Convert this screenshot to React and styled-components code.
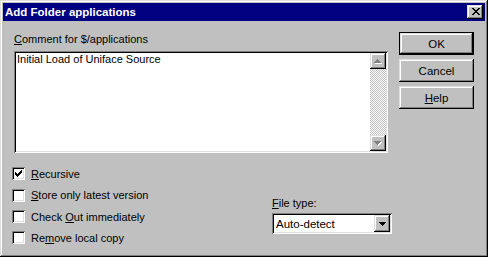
import React from "react";
import styled, { createGlobalStyle } from "styled-components";

// pixel glyphs, one string per row
const pix = (rows) =>
  rows
    .flatMap((r, y) => [...r].map((c, x) => (c === "X" ? `M${x} ${y}h1v1h-1z` : "")))
    .join("");

const CLOSE = ["XX....XX", ".XX..XX.", "..XXXX..", "...XX...", "..XXXX..", ".XX..XX.", "XX....XX"];
const UP = ["...X...", "..XXX..", ".XXXXX.", "XXXXXXX"];
const DOWN = ["XXXXXXX", ".XXXXX.", "..XXX..", "...X..."];
const CHECK = ["......X", ".....XX", "X...XXX", "XX.XXX.", "XXXXX..", ".XXX...", "..X...."];

const raised = `
  box-shadow: inset -1px -1px #000, inset 1px 1px #dfdfdf,
    inset -2px -2px #808080, inset 2px 2px #fff;
`;
const sunken = `
  box-shadow: inset 1px 1px #808080, inset -1px -1px #fff,
    inset 2px 2px #000, inset -2px -2px #dfdfdf;
`;

const GlobalStyle = createGlobalStyle`
  html, body { margin: 0; padding: 0; background: #c0c0c0; }
  body {
    font-family: "Liberation Sans", Arial, sans-serif;
    font-size: 11px;
    color: #000;
  }
  u { text-underline-offset: 1px; }
`;

function Glyph({ rows, color = "#000", shadow }) {
  const w = rows[0].length;
  const h = rows.length;
  const d = pix(rows);
  return (
    <svg width={w + (shadow ? 1 : 0)} height={h + (shadow ? 1 : 0)} shapeRendering="crispEdges">
      {shadow && <path d={d} fill={shadow} transform="translate(1 1)" />}
      <path d={d} fill={color} />
    </svg>
  );
}

export default function App() {
  return (
    <>
      <GlobalStyle />
      <Window>
        <TitleBar>
          <span>Add Folder applications</span>
          <CloseButton>
            <Glyph rows={CLOSE} />
          </CloseButton>
        </TitleBar>

        <Body>
          <LeftCol>
            <Label $mt={1}>
              <u>C</u>omment for $/applications
            </Label>
            <TextArea>
              <TextContent>Initial Load of Uniface Source</TextContent>
              <ScrollBar>
                <ScrollButton>
                  <Glyph rows={UP} color="#808080" shadow="#fff" />
                </ScrollButton>
                <ScrollButton>
                  <Glyph rows={DOWN} color="#808080" shadow="#fff" />
                </ScrollButton>
              </ScrollBar>
            </TextArea>

            <BottomRow>
              <CheckList>
                <CheckRow>
                  <CheckBox>
                    <Glyph rows={CHECK} />
                  </CheckBox>
                  <span><u>R</u>ecursive</span>
                </CheckRow>
                <CheckRow $tall>
                  <CheckBox />
                  <span><u>S</u>tore only latest version</span>
                </CheckRow>
                <CheckRow>
                  <CheckBox />
                  <span>Check <u>O</u>ut immediately</span>
                </CheckRow>
                <CheckRow>
                  <CheckBox />
                  <span>Re<u>m</u>ove local copy</span>
                </CheckRow>
              </CheckList>

              <FileGroup>
                <Label>
                  <u>F</u>ile type:
                </Label>
                <Combo>
                  <ComboText>Auto-detect</ComboText>
                  <ComboButton>
                    <Glyph rows={DOWN} />
                  </ComboButton>
                </Combo>
              </FileGroup>
            </BottomRow>
          </LeftCol>

          <ButtonCol>
            <Button $default>OK</Button>
            <Button>Cancel</Button>
            <Button>
              <u>H</u>elp
            </Button>
          </ButtonCol>
        </Body>
      </Window>
    </>
  );
}

//Styled components

const Window = styled.div`
  width: 488px;
  height: 257px;
  box-sizing: border-box;
  padding: 3px;
  background: #c0c0c0;
  display: flex;
  flex-direction: column;
  box-shadow: inset -1px -1px #000, inset 1px 1px #dfdfdf,
    inset -2px -2px #808080, inset 2px 2px #fff;
`;

const TitleBar = styled.div`
  height: 18px;
  flex: none;
  background: #000080;
  color: #fff;
  font-weight: bold;
  font-size: 11.5px;
  display: flex;
  align-items: center;
  justify-content: space-between;
  padding: 0 2px;
`;

const CloseButton = styled.div`
  width: 16px;
  height: 14px;
  box-sizing: border-box;
  background: #c0c0c0;
  display: flex;
  align-items: center;
  justify-content: center;
  padding: 0 0 1px 1px;
  ${raised}
`;

const Body = styled.div`
  display: flex;
  align-items: flex-start;
  gap: 11px;
  padding: 11px 0 0 11px;
`;

const LeftCol = styled.div`
  width: 374px;
  flex: none;
  display: flex;
  flex-direction: column;
`;

const Label = styled.div`
  line-height: 13px;
  margin-top: ${(p) => p.$mt || 0}px;
  white-space: nowrap;
`;

const TextArea = styled.div`
  height: 102px;
  margin-top: 5px;
  box-sizing: border-box;
  padding: 2px;
  background: #fff;
  display: flex;
  ${sunken}
`;

const TextContent = styled.div`
  flex: 1;
  padding: 0 1px;
  line-height: 13px;
`;

const ScrollBar = styled.div`
  width: 16px;
  display: flex;
  flex-direction: column;
  justify-content: space-between;
  background: repeating-conic-gradient(#c0c0c0 0 25%, #fff 0 50%) 0 0 / 2px 2px;
`;

const ScrollButton = styled.div`
  width: 16px;
  height: 16px;
  box-sizing: border-box;
  background: #c0c0c0;
  display: flex;
  align-items: center;
  justify-content: center;
  ${raised}
`;

const BottomRow = styled.div`
  display: flex;
  margin-top: 10px;
`;

const CheckList = styled.div`
  width: 260px;
  flex: none;
  margin-left: -2px;
  display: flex;
  flex-direction: column;
`;

const CheckRow = styled.div`
  height: ${(p) => (p.$tall ? 22 : 21)}px;
  display: flex;
  align-items: center;
  gap: 6px;
  white-space: nowrap;
`;

const CheckBox = styled.span`
  width: 13px;
  height: 13px;
  flex: none;
  box-sizing: border-box;
  background: #fff;
  display: flex;
  align-items: center;
  justify-content: center;
  ${sunken}
`;

const FileGroup = styled.div`
  flex: none;
  margin-top: 34px;
  display: flex;
  flex-direction: column;
  gap: 3px;
`;

const Combo = styled.div`
  width: 120px;
  height: 21px;
  box-sizing: border-box;
  padding: 2px;
  background: #fff;
  display: flex;
  align-items: stretch;
  ${sunken}
`;

const ComboText = styled.div`
  flex: 1;
  padding-left: 2px;
  display: flex;
  align-items: center;
  font-size: 11.5px;
`;

const ComboButton = styled.div`
  width: 16px;
  box-sizing: border-box;
  background: #c0c0c0;
  display: flex;
  align-items: center;
  justify-content: center;
  ${raised}
`;

const ButtonCol = styled.div`
  flex: none;
  display: flex;
  flex-direction: column;
  gap: 4px;
`;

const Button = styled.div`
  width: 75px;
  height: 23px;
  box-sizing: border-box;
  background: #c0c0c0;
  display: flex;
  align-items: center;
  justify-content: center;
  font-size: 11.5px;
  border: ${(p) => (p.$default ? "1px solid #000" : "none")};
  ${raised}
`;
